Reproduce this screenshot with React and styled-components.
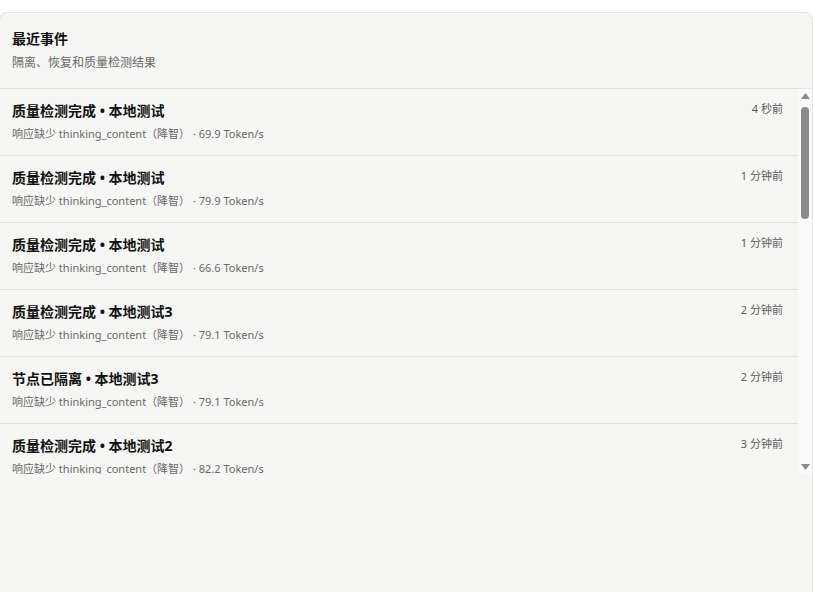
import React, { useRef, useState, useEffect } from "react";
import styled, { createGlobalStyle } from "styled-components";

const GlobalStyle = createGlobalStyle`
  html, body {
    margin: 0;
    padding: 0;
    background: #ffffff;
    overflow: hidden;
  }
  body {
    font-family: "Noto Sans", "Noto Sans CJK SC", sans-serif;
    -webkit-font-smoothing: antialiased;
  }
`;

const Page = styled.div`
  padding-top: 12px;
`;

const Card = styled.section`
  margin-left: -1px;
  min-height: 620px;
  background: #f6f6f4;
  border: 1px solid #e2e2e0;
  border-radius: 8px;
  display: flex;
  flex-direction: column;
`;

const Header = styled.header`
  padding: 16px 12px 16px;
  border-bottom: 1px solid #e2e2e0;
  display: flex;
  flex-direction: column;
  gap: 5px;
`;

const Title = styled.h2`
  margin: 0;
  font-size: 14px;
  line-height: 20px;
  font-weight: 700;
  color: #111111;
`;

const Subtitle = styled.p`
  margin: 0;
  font-size: 12px;
  line-height: 18px;
  color: #6a6a6a;
`;

const ListFrame = styled.div`
  display: flex;
  height: 385px;
`;

const List = styled.ul`
  flex: 1;
  margin: 0;
  padding: 0;
  list-style: none;
  overflow-y: auto;
  scrollbar-width: none;
  &::-webkit-scrollbar {
    display: none;
  }
`;

const Row = styled.li`
  display: flex;
  justify-content: space-between;
  align-items: flex-start;
  padding: 12px 15px 12px 12px;
  border-bottom: 1px solid #e2e2e0;
`;

const RowBody = styled.div`
  display: flex;
  flex-direction: column;
  gap: 4px;
`;

const RowTitle = styled.div`
  font-size: 14px;
  line-height: 20px;
  font-weight: 700;
  color: #111111;
`;

const RowMeta = styled.div`
  font-size: 11px;
  line-height: 18px;
  color: #6a6a6a;
  white-space: pre;
`;

const Time = styled.span`
  font-size: 11px;
  line-height: 16px;
  color: #5c5c5c;
  white-space: nowrap;
`;

const Rail = styled.div`
  width: 14px;
  flex: none;
  background: #fafafa;
  display: flex;
  flex-direction: column;
`;

const ArrowButton = styled.button`
  width: 14px;
  height: 14px;
  flex: none;
  padding: 0;
  border: 0;
  background: transparent;
  display: flex;
  align-items: center;
  justify-content: center;
  cursor: default;
`;

const Track = styled.div`
  flex: 1;
  display: flex;
  flex-direction: column;
  padding: 0 3px;
`;

const Thumb = styled.div`
  width: 8px;
  border-radius: 4px;
  background: #8a8a8a;
  flex: none;
`;

const Arrow = ({ up }) => (
  <svg width="9" height="6" viewBox="0 0 9 6">
    <path d={up ? "M4.5 0 L9 6 L0 6 Z" : "M0 0 L9 0 L4.5 6 Z"} fill="#8a8a8a" />
  </svg>
);

const events = [
  { title: "质量检测完成 • 本地测试", speed: "69.9", time: "4 秒前" },
  { title: "质量检测完成 • 本地测试", speed: "79.9", time: "1 分钟前" },
  { title: "质量检测完成 • 本地测试", speed: "66.6", time: "1 分钟前" },
  { title: "质量检测完成 • 本地测试3", speed: "79.1", time: "2 分钟前" },
  { title: "节点已隔离 • 本地测试3", speed: "79.1", time: "2 分钟前" },
  { title: "质量检测完成 • 本地测试2", speed: "82.2", time: "3 分钟前" },
  { title: "质量检测完成 • 本地测试2", speed: "80.4", time: "3 分钟前" },
  { title: "节点已隔离 • 本地测试2", speed: "80.4", time: "4 分钟前" },
  { title: "质量检测完成 • 本地测试", speed: "71.3", time: "5 分钟前" },
  { title: "节点已恢复 • 本地测试", speed: "71.3", time: "6 分钟前" },
  { title: "质量检测完成 • 本地测试3", speed: "77.8", time: "7 分钟前" },
  { title: "质量检测完成 • 本地测试3", speed: "76.2", time: "8 分钟前" },
  { title: "节点已恢复 • 本地测试3", speed: "76.2", time: "9 分钟前" },
  { title: "质量检测完成 • 本地测试2", speed: "83.5", time: "10 分钟前" },
  { title: "质量检测完成 • 本地测试", speed: "68.1", time: "11 分钟前" },
  { title: "节点已恢复 • 本地测试2", speed: "83.5", time: "12 分钟前" },
  { title: "质量检测完成 • 本地测试", speed: "70.6", time: "13 分钟前" },
  { title: "质量检测完成 • 本地测试3", speed: "78.0", time: "14 分钟前" },
];

export default function App() {
  const listRef = useRef(null);
  const [bar, setBar] = useState({ size: 115, offset: 4 });

  const measure = () => {
    const el = listRef.current;
    if (!el) return;
    const trackLen = el.clientHeight - 28 - 6;
    const ratio = el.clientHeight / el.scrollHeight;
    const size = Math.max(24, Math.round(trackLen * ratio));
    const maxScroll = el.scrollHeight - el.clientHeight || 1;
    const offset = 4 + Math.round((trackLen - size) * (el.scrollTop / maxScroll));
    setBar({ size, offset });
  };

  useEffect(() => {
    measure();
  }, []);

  const step = (dir) => {
    if (listRef.current) listRef.current.scrollTop += dir * 40;
  };

  return (
    <>
      <GlobalStyle />
      <Page>
        <Card>
          <Header>
            <Title>最近事件</Title>
            <Subtitle>隔离、恢复和质量检测结果</Subtitle>
          </Header>
          <ListFrame>
            <List ref={listRef} onScroll={measure}>
              {events.map((e, i) => (
                <Row key={i}>
                  <RowBody>
                    <RowTitle>{e.title}</RowTitle>
                    <RowMeta>
                      {`响应缺少 thinking_content（降智） · ${e.speed} Token/s`}
                    </RowMeta>
                  </RowBody>
                  <Time>{e.time}</Time>
                </Row>
              ))}
            </List>
            <Rail>
              <ArrowButton aria-label="上移" onClick={() => step(-1)}>
                <Arrow up />
              </ArrowButton>
              <Track>
                <Thumb style={{ height: bar.size, marginTop: bar.offset }} />
              </Track>
              <ArrowButton aria-label="下移" onClick={() => step(1)}>
                <Arrow />
              </ArrowButton>
            </Rail>
          </ListFrame>
        </Card>
      </Page>
    </>
  );
}
